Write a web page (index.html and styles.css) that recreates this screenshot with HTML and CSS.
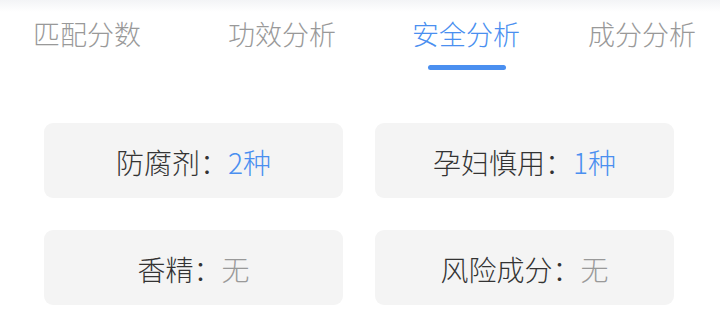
FILE: index.html
```html
<!DOCTYPE html>
<html lang="zh-CN">
<head>
    <meta charset="UTF-8">
    <meta name="viewport" content="width=device-width, initial-scale=1.0">
    <title>安全分析</title>
    <link rel="stylesheet" href="styles.css">
</head>
<body>
    <div class="top-shade"></div>
    <div class="tabs">
        <div class="tab tab-1">匹配分数</div>
        <div class="tab tab-2">功效分析</div>
        <div class="tab tab-3 active">安全分析</div>
        <div class="tab tab-4">成分分析</div>
    </div>
    <div class="grid">
        <div class="card">防腐剂：<span class="num">2种</span></div>
        <div class="card">孕妇慎用：<span class="num">1种</span></div>
        <div class="card">香精：<span class="none">无</span></div>
        <div class="card">风险成分：<span class="none">无</span></div>
    </div>
</body>
</html>
```

FILE: styles.css
```css
body {
    margin: 0;
    width: 720px;
    height: 329px;
    overflow: hidden;
    background: #fff;
    font-family: "Noto Sans CJK SC", "Noto Sans", sans-serif;
    font-weight: 300;
}
.top-shade {
    height: 12px;
    background: linear-gradient(to bottom, #f3f4f6, #fff);
}
.tabs {
    display: flex;
    height: 60px;
}
.tab {
    position: relative;
    font-size: 27px;
    line-height: 20px;
    color: #999;
    padding-top: 12px;
}
.tab-1 { margin-left: 33px; }
.tab-2 { margin-left: 87px; }
.tab-3 { margin-left: 76px; }
.tab-4 { margin-left: 68px; }
.tab.active {
    color: #4a8ff0;
}
.tab.active::after {
    content: "";
    position: absolute;
    left: 16px;
    right: 14px;
    top: 53px;
    height: 5px;
    border-radius: 3px;
    background: #4a8ff0;
}
.grid {
    display: grid;
    grid-template-columns: 299px 299px;
    column-gap: 32px;
    row-gap: 32px;
    padding: 51px 0 0 44px;
}
.card {
    height: 75px;
    border-radius: 9px;
    background: #f4f4f4;
    display: flex;
    align-items: center;
    justify-content: center;
    font-size: 28px;
    color: #333;
    padding-top: 3px;
    box-sizing: border-box;
}
.num {
    color: #4a8ff0;
}
.none {
    color: #999;
}
```
